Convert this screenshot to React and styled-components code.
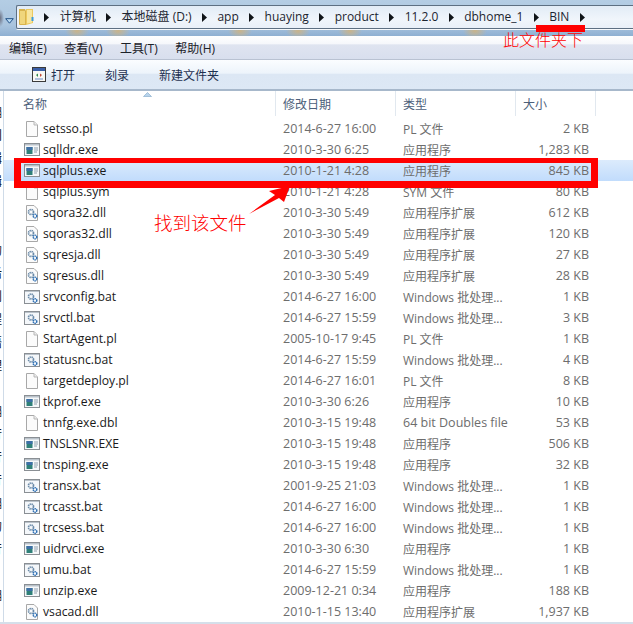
import React from "react";
import styled, { createGlobalStyle } from "styled-components";

const Global = createGlobalStyle`
  html, body { margin: 0; padding: 0; background: #fff; }
  body { font-family: "Open Sans", "Noto Sans CJK SC", sans-serif; }
`;

const Page = styled.div`
  position: relative;
  width: 633px;
  height: 624px;
  overflow: hidden;
  background: #fff;
  display: flex;
  flex-direction: column;
  font-family: "Open Sans", "Noto Sans CJK SC", sans-serif;
`;

const AddressArea = styled.div`
  height: 36px;
  flex: none;
  box-sizing: border-box;
  padding: 5px 0 7px 3px;
  display: flex;
  align-items: stretch;
  gap: 1px;
  background:
    radial-gradient(ellipse 4px 9px at 0px 18px, #6b6f80 0%, transparent 100%),
    radial-gradient(ellipse 12px 8px at 77px 31px, #c9b48a 0%, transparent 100%),
    radial-gradient(ellipse 12px 8px at 118px 31px, #c9b48a 0%, transparent 100%),
    radial-gradient(ellipse 12px 8px at 240px 31px, #c9b48a 0%, transparent 100%),
    radial-gradient(ellipse 12px 8px at 298px 31px, #c9b48a 0%, transparent 100%),
    radial-gradient(ellipse 12px 8px at 350px 31px, #c9b48a 0%, transparent 100%),
    radial-gradient(ellipse 12px 8px at 475px 31px, #c9b48a 0%, transparent 100%),
    linear-gradient(#b4cde4 0%, #a9c4de 70%, #8fb0d2 100%);
`;

const NavDrop = styled.div`
  width: 12px;
  flex: none;
  display: flex;
  align-items: center;
  justify-content: center;
  padding-top: 7px;
`;

const AddressBox = styled.div`
  flex: 1;
  display: flex;
  align-items: center;
  gap: 10.4px;
  box-sizing: border-box;
  padding-left: 2px;
  border: 1px solid #5d6f82;
  border-right: none;
  border-radius: 2px 0 0 2px;
  background: linear-gradient(#e2ecf6, #f0f5fb 60%, #e9f0f8);
  box-shadow: 0 1px 0 #f6f9fc;
  font-size: 12px;
  color: #1c2530;
  white-space: nowrap;
  overflow: hidden;
  & > svg { flex: none; }
`;

const Crumb = styled.span`
  line-height: 16px;
  flex: none;
`;

const Menu = styled.div`
  height: 24px;
  flex: none;
  box-sizing: border-box;
  padding-left: 9px;
  display: flex;
  align-items: center;
  gap: 17.5px;
  font-size: 12px;
  color: #1c2128;
  background: linear-gradient(#fff 0%, #f5f7fb 35%, #dfe4f0 38%, #d8dfee 100%);
  border-bottom: 1px solid #b9c2d2;
`;

const Toolbar = styled.div`
  height: 31px;
  flex: none;
  box-sizing: border-box;
  padding-left: 32px;
  display: flex;
  align-items: center;
  font-size: 12px;
  color: #1e3050;
  background: linear-gradient(#fbfdff 0%, #edf4fb 45%, #dce7f4 50%, #dde8f5 100%);
  border-bottom: 2px solid #a7b8cb;
`;

const ToolItem = styled.span`
  display: flex;
  align-items: center;
  gap: 5px;
  margin-right: ${(p) => p.$after}px;
`;

const Body = styled.div`
  flex: 1;
  display: flex;
  min-height: 0;
  border-bottom: 2px solid #d5dfea;
`;

const Side = styled.div`
  width: 3px;
  flex: none;
  overflow: hidden;
  border-right: 1px solid #cfdbe8;
  padding-top: 10px;
  font-size: 12px;
  color: #111;
`;

const SideLine = styled.div`
  height: 23px;
  line-height: 23px;
  margin-left: -10px;
  white-space: nowrap;
`;

const Main = styled.div`
  flex: 1;
  min-width: 0;
`;

const Header = styled.div`
  height: 27px;
  display: grid;
  grid-template-columns: 272px 120px 120px 80px;
  box-sizing: border-box;
  padding-bottom: 2px;
`;

const HeadCell = styled.div`
  position: relative;
  box-sizing: border-box;
  padding-left: ${(p) => p.$pad}px;
  display: flex;
  align-items: center;
  font-size: 12px;
  color: #4c607a;
  border-right: 1px solid #e1e8ef;
`;

const SortMark = styled.svg`
  position: absolute;
  left: 139px;
  top: 1px;
`;

const Row = styled.div`
  height: 21px;
  display: grid;
  grid-template-columns: 279px 120px 120px 66px;
  align-items: center;
  font-size: 12.5px;
  color: #6d6d6d;
  white-space: nowrap;
  background: ${(p) => (p.$selected ? "linear-gradient(#dcebfc, #c1dcfc)" : "transparent")};
`;

const NameCell = styled.div`
  display: flex;
  align-items: center;
  gap: 3px;
  padding-left: 19px;
  color: #1a1a1a;
  font-size: 12.2px;
`;

const TypeCell = styled.div`
  font-size: ${(p) => (p.$latin ? 12.5 : 12)}px;
`;

const IconBox = styled.span`
  width: 17px;
  height: 17px;
  flex: none;
  display: flex;
  align-items: center;
  justify-content: center;
`;

const SizeCell = styled.div`
  text-align: right;
`;

const RedFrame = styled.div`
  position: absolute;
  left: 14px;
  top: 158px;
  width: 570px;
  height: 18px;
  border: solid #ff0000;
  border-width: 5px 7px 7px 7px;
`;

const RedBar = styled.div`
  position: absolute;
  left: 536px;
  top: 25px;
  width: 49px;
  height: 7px;
  background: #ff0000;
`;

const RedNote = styled.div`
  position: absolute;
  color: #ff0000;
  left: ${(p) => p.$x}px;
  top: ${(p) => p.$y}px;
  font-size: ${(p) => p.$size}px;
  line-height: 1.2;
  font-family: "Noto Sans CJK SC", sans-serif;
  font-weight: 300;
  white-space: nowrap;
`;

const ArrowSvg = styled.svg`
  position: absolute;
  left: 0;
  top: 0;
  pointer-events: none;
`;

const Chevron = () => (
  <svg width="5" height="9" viewBox="0 0 5 9">
    <path d="M0 0 L5 4.5 L0 9 Z" fill="#101418" />
  </svg>
);

const FolderIcon = () => (
  <svg width="15" height="18" viewBox="0 0 15 18">
    <path d="M0 1 H6 L7 3 V17 H1 Q0 17 0 16 Z" fill="#d9b44e" />
    <path d="M1 3 H6 V16 H1 Z" fill="#f0d67c" />
    <path d="M7 1 H14 V15 L7 17 Z" fill="#ecc95e" />
    <path d="M8 2 H13 V14.5 L8 15.5 Z" fill="#f8e6a0" />
    <path d="M12.5 9 H14.5 V13 H12.5 Z" fill="#3d9ad6" />
  </svg>
);

const PageIcon = () => (
  <svg width="14" height="16" viewBox="0 0 14 16">
    <path d="M1.5 0.5 H9 L12.5 4 V15.5 H1.5 Z" fill="#fbfbfb" stroke="#a8a8a8" />
    <path d="M9 0.5 V4 H12.5" fill="#ececec" stroke="#b8b8b8" />
  </svg>
);

const ExeIcon = () => (
  <svg width="16" height="13" viewBox="0 0 16 13">
    <rect x="0.5" y="0.5" width="15" height="12" fill="#f6f8fa" stroke="#8a8f94" />
    <rect x="1" y="1" width="14" height="1.5" fill="#b9c2ca" />
    <rect x="2.5" y="4" width="6" height="7" fill="#2f8078" />
    <rect x="2.5" y="4" width="6" height="3" fill="#3d6fa6" />
    <path d="M10 5 H14 M10 7 H14 M10 9 H13" stroke="#8fa0ae" />
  </svg>
);

const Gears = () => (
  <g fill="none">
    <circle cx="6" cy="6" r="2.5" strokeWidth="1.7" stroke="#6a8aa8" strokeDasharray="1.4 .6" />
    <circle cx="10" cy="10" r="1.8" strokeWidth="1.5" stroke="#2f70b4" strokeDasharray="1.3 .5" />
  </g>
);

const DllIcon = () => (
  <svg width="14" height="16" viewBox="0 0 14 16">
    <path d="M1.5 0.5 H9 L12.5 4 V15.5 H1.5 Z" fill="#fbfbfb" stroke="#a8a8a8" />
    <g transform="translate(0 1)"><Gears /></g>
  </svg>
);

const BatIcon = () => (
  <svg width="16" height="14" viewBox="0 0 16 14">
    <rect x="0.5" y="0.5" width="15" height="13" fill="#f4f7fa" stroke="#8a8f94" />
    <rect x="1" y="1" width="14" height="1" fill="#b9c2ca" />
    <g transform="translate(1 0.5)"><Gears /></g>
  </svg>
);

const icons = { page: PageIcon, exe: ExeIcon, dll: DllIcon, bat: BatIcon };

const BAT = "Windows 批处理...";
const files = [
  ["setsso.pl", "page", "2014-6-27 16:00", "PL 文件", "2 KB"],
  ["sqlldr.exe", "exe", "2010-3-30 6:25", "应用程序", "1,283 KB"],
  ["sqlplus.exe", "exe", "2010-1-21 4:28", "应用程序", "845 KB", true],
  ["sqlplus.sym", "page", "2010-1-21 4:28", "SYM 文件", "80 KB"],
  ["sqora32.dll", "dll", "2010-3-30 5:49", "应用程序扩展", "612 KB"],
  ["sqoras32.dll", "dll", "2010-3-30 5:49", "应用程序扩展", "120 KB"],
  ["sqresja.dll", "dll", "2010-3-30 5:49", "应用程序扩展", "27 KB"],
  ["sqresus.dll", "dll", "2010-3-30 5:49", "应用程序扩展", "28 KB"],
  ["srvconfig.bat", "bat", "2014-6-27 16:00", BAT, "1 KB"],
  ["srvctl.bat", "bat", "2014-6-27 15:59", BAT, "3 KB"],
  ["StartAgent.pl", "page", "2005-10-17 9:45", "PL 文件", "1 KB"],
  ["statusnc.bat", "bat", "2014-6-27 15:59", BAT, "4 KB"],
  ["targetdeploy.pl", "page", "2014-6-27 16:01", "PL 文件", "8 KB"],
  ["tkprof.exe", "exe", "2010-3-30 6:26", "应用程序", "10 KB"],
  ["tnnfg.exe.dbl", "page", "2010-3-15 19:48", "64 bit Doubles file", "53 KB"],
  ["TNSLSNR.EXE", "exe", "2010-3-15 19:48", "应用程序", "506 KB"],
  ["tnsping.exe", "exe", "2010-3-15 19:48", "应用程序", "32 KB"],
  ["transx.bat", "bat", "2001-9-25 21:03", BAT, "1 KB"],
  ["trcasst.bat", "bat", "2014-6-27 16:00", BAT, "1 KB"],
  ["trcsess.bat", "bat", "2014-6-27 16:00", BAT, "1 KB"],
  ["uidrvci.exe", "exe", "2010-3-30 6:30", "应用程序", "1 KB"],
  ["umu.bat", "bat", "2014-6-27 15:59", BAT, "1 KB"],
  ["unzip.exe", "exe", "2009-12-21 0:34", "应用程序", "188 KB"],
  ["vsacad.dll", "dll", "2010-1-15 13:40", "应用程序扩展", "1,937 KB"],
];

const crumbs = ["计算机", "本地磁盘 (D:)", "app", "huaying", "product", "11.2.0", "dbhome_1", "BIN"];
const sideText = ["编", "门", "辑", "辑", "", "", "的", "后", "划", "程", "语", "理", "", "编", "行", "行", "行", "编", "的", "行", "", "编"];

export default function App() {
  return (
    <Page>
      <Global />
      <AddressArea>
        <NavDrop>
          <svg width="9" height="6" viewBox="0 0 9 6">
            <path d="M0.7 0.7 H8.3 L4.5 5.2 Z" fill="#bcdcf4" stroke="#1f4f86" />
          </svg>
        </NavDrop>
        <AddressBox>
          <FolderIcon />
          {crumbs.map((c) => (
            <React.Fragment key={c}>
              <Chevron />
              <Crumb>{c}</Crumb>
            </React.Fragment>
          ))}
          <Chevron />
        </AddressBox>
      </AddressArea>

      <Menu>
        <span>编辑(E)</span>
        <span>查看(V)</span>
        <span>工具(T)</span>
        <span>帮助(H)</span>
      </Menu>

      <Toolbar>
        <ToolItem $after={30}>
          <svg width="14" height="15" viewBox="0 0 14 15">
            <rect x="0.5" y="0.5" width="13" height="14" fill="#f8f8f4" stroke="#3a3a3a" />
            <rect x="1" y="1" width="12" height="3" fill="#3a5fa8" />
            <path d="M4 8 L6 6.5 V10 Z" fill="#2f8a4a" />
            <path d="M10 8 L8 6.5 V10 Z" fill="#c04a3a" />
            <path d="M3 12 H11" stroke="#6a8ac8" />
          </svg>
          打开
        </ToolItem>
        <ToolItem $after={30}>刻录</ToolItem>
        <ToolItem $after={0}>新建文件夹</ToolItem>
      </Toolbar>

      <Body>
        <Side>
          {sideText.map((t, i) => (
            <SideLine key={i}>{t}</SideLine>
          ))}
        </Side>
        <Main>
          <Header>
            <HeadCell $pad={19}>
              名称
              <SortMark width="9" height="5" viewBox="0 0 9 5">
                <path d="M0.5 4.5 L4.5 0.5 L8.5 4.5 Z" fill="#b8d4ec" stroke="#7fa6c8" strokeWidth="0.6" />
              </SortMark>
            </HeadCell>
            <HeadCell $pad={7}>修改日期</HeadCell>
            <HeadCell $pad={7}>类型</HeadCell>
            <HeadCell $pad={7}>大小</HeadCell>
          </Header>
          {files.map(([name, icon, date, type, size, selected]) => {
            const Icon = icons[icon];
            return (
              <Row key={name} $selected={selected}>
                <NameCell>
                  <IconBox>
                    <Icon />
                  </IconBox>
                  {name}
                </NameCell>
                <div>{date}</div>
                <TypeCell $latin={!/[\u4e00-\u9fff]/.test(type)}>{type}</TypeCell>
                <SizeCell>{size}</SizeCell>
              </Row>
            );
          })}
        </Main>
      </Body>

      <RedFrame />
      <RedBar />
      <RedNote $x={503} $y={30} $size={16}>此文件夹下</RedNote>
      <RedNote $x={154} $y={211} $size={18.5}>找到该文件</RedNote>
      <ArrowSvg width="633" height="624" viewBox="0 0 633 624">
        <path d="M249 214 L275 195 L269 191 L290 186 L284 202 L279 198 Z" fill="#ff0000" />
      </ArrowSvg>
    </Page>
  );
}
